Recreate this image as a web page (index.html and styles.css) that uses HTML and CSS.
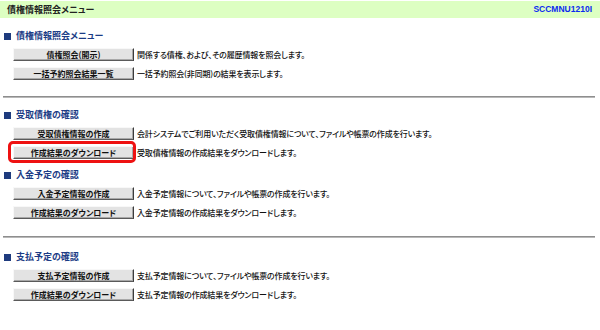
FILE: index.html
```html
<!DOCTYPE html>
<html lang="ja">
<head>
<meta charset="utf-8">
<title>債権情報照会メニュー</title>
<link rel="stylesheet" href="styles.css">
</head>
<body>
<div class="header">
  <span class="header-title">債権情報照会メニュー</span>
  <span class="screen-id">SCCMNU1210I</span>
</div>

<div class="section first">
  <div class="heading"><span class="square"></span>債権情報照会メニュー</div>
  <div class="rows">
    <div class="row"><span class="btn">債権照会(開示)</span><span class="desc">関係する債権、および、その履歴情報を照会します。</span></div>
    <div class="row"><span class="btn">一括予約照会結果一覧</span><span class="desc">一括予約照会(非同期)の結果を表示します。</span></div>
  </div>
</div>

<div class="sep"></div>

<div class="section">
  <div class="heading"><span class="square"></span>受取債権の確認</div>
  <div class="rows">
    <div class="row"><span class="btn">受取債権情報の作成</span><span class="desc">会計システムでご利用いただく受取債権情報について、ファイルや帳票の作成を行います。</span></div>
    <div class="row"><span class="btn marked">作成結果のダウンロード</span><span class="desc">受取債権情報の作成結果をダウンロードします。</span></div>
  </div>
</div>

<div class="section next">
  <div class="heading"><span class="square"></span>入金予定の確認</div>
  <div class="rows">
    <div class="row"><span class="btn">入金予定情報の作成</span><span class="desc">入金予定情報について、ファイルや帳票の作成を行います。</span></div>
    <div class="row"><span class="btn">作成結果のダウンロード</span><span class="desc">入金予定情報の作成結果をダウンロードします。</span></div>
  </div>
</div>

<div class="sep last"></div>

<div class="section">
  <div class="heading"><span class="square"></span>支払予定の確認</div>
  <div class="rows">
    <div class="row"><span class="btn">支払予定情報の作成</span><span class="desc">支払予定情報について、ファイルや帳票の作成を行います。</span></div>
    <div class="row"><span class="btn">作成結果のダウンロード</span><span class="desc">支払予定情報の作成結果をダウンロードします。</span></div>
  </div>
</div>
</body>
</html>
```

FILE: styles.css
```css
html, body {
  margin: 0;
  padding: 0;
  background: #ffffff;
}

body {
  width: 600px;
  height: 330px;
  overflow: hidden;
  font-family: "Noto Sans CJK JP", "Noto Sans", sans-serif;
  font-feature-settings: "palt";
  color: #111;
}

.header {
  margin-top: 1px;
  height: 17px;
  background: #ddffc2;
  display: flex;
  align-items: center;
  justify-content: space-between;
  padding: 0 8px 0 7px;
}

.header-title {
  font-size: 9px;
  font-weight: bold;
  color: #222;
  line-height: 17px;
}

.screen-id {
  font-family: "Liberation Sans", Arial, sans-serif;
  font-size: 8.5px;
  font-weight: bold;
  color: #0b2bf0;
  line-height: 17px;
}

.section {
  padding-left: 4px;
}

.section.first {
  margin-top: 11px;
}

.section.next {
  margin-top: 9px;
}

.heading {
  display: flex;
  align-items: center;
  height: 14px;
  line-height: 14px;
  font-size: 9px;
  font-weight: bold;
  color: #1b3c86;
  margin-bottom: 5px;
}

.square {
  width: 7px;
  height: 7px;
  background: #1e3b7e;
  margin-right: 5px;
  flex: none;
}

.rows {
  display: flex;
  flex-direction: column;
  gap: 6px;
  padding-left: 9px;
}

.row {
  display: flex;
  align-items: center;
  height: 13px;
}

.btn {
  position: relative;
  box-sizing: border-box;
  width: 121px;
  height: 13px;
  flex: none;
  display: flex;
  align-items: center;
  justify-content: center;
  background: #e3e3e3;
  border-style: solid;
  border-width: 1px;
  border-color: #f8f8f8 #3c3c3c #5a5a5a #f8f8f8;
  box-shadow: inset -1px -1px 0 #a8a8a8;
  font-size: 8px;
  font-weight: bold;
  color: #111;
  line-height: 11px;
  white-space: nowrap;
}

.btn.marked::after {
  content: "";
  position: absolute;
  left: -6px;
  top: -6px;
  right: -3px;
  bottom: -5px;
  border: 3px solid #ee1111;
  border-radius: 5px;
}

.desc {
  margin-left: 3px;
  font-size: 8px;
  font-weight: 500;
  letter-spacing: -0.15px;
  line-height: 13px;
  color: #111;
  white-space: nowrap;
}

.sep {
  margin: 16px 5px 10px 3px;
  height: 0;
  border-top: 1px solid #8e8e8e;
  border-bottom: 1px solid #b8b8b8;
}

.sep.last {
  margin-top: 17px;
  margin-bottom: 12px;
}
```
